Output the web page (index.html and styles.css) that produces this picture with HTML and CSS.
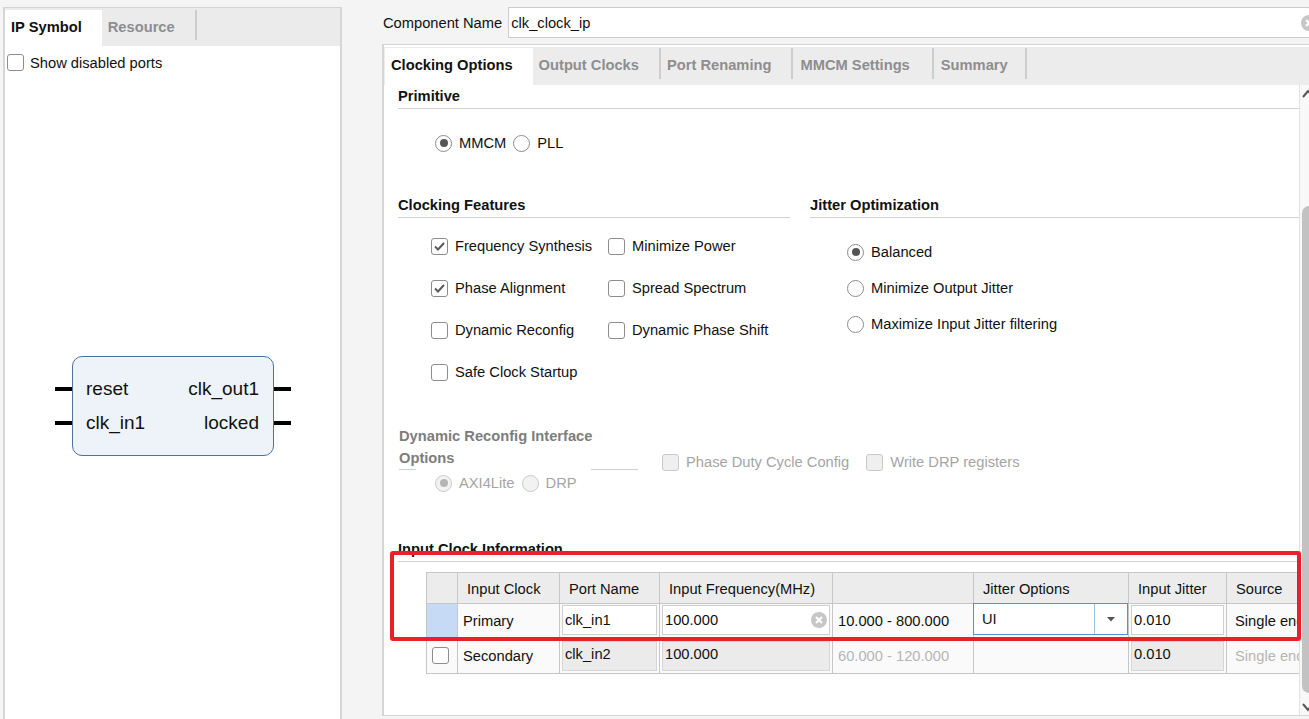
FILE: index.html
```html
<!DOCTYPE html>
<html>
<head>
<meta charset="utf-8">
<title>Clocking Wizard</title>
<link rel="stylesheet" href="styles.css">
</head>
<body>
<div class="app">
  <aside class="left">
    <div class="ltabs">
      <div class="ltab active">IP Symbol</div>
      <div class="ltab">Resource</div>
      <i class="sep"></i>
    </div>
    <div class="lbody">
      <div class="opt"><span class="cb"></span>Show disabled ports</div>
      <div class="symbol">
        <div class="sym-row"><span>reset</span><span>clk_out1</span></div>
        <div class="sym-row"><span>clk_in1</span><span>locked</span></div>
      </div>
    </div>
  </aside>

  <main class="right">
    <div class="name-row">
      <span class="name-label">Component Name</span>
      <div class="name-input">
        <span>clk_clock_ip</span>
        <svg class="clear" width="16" height="16" viewBox="0 0 16 16"><circle cx="8" cy="8" r="8" fill="#c6c6c6"/><path d="M5 5L11 11M11 5L5 11" stroke="#fff" stroke-width="2"/></svg>
      </div>
    </div>

    <div class="panel">
      <div class="tabs">
        <div class="tab active">Clocking Options</div>
        <div class="tab">Output Clocks</div>
        <i class="sep"></i>
        <div class="tab">Port Renaming</div>
        <i class="sep"></i>
        <div class="tab wide">MMCM Settings</div>
        <i class="sep"></i>
        <div class="tab last">Summary</div>
        <i class="sep"></i>
      </div>
      <div class="panel-body">
        <div class="content">
          <div class="title">Primitive</div>
          <div class="prim">
            <div class="ropt"><span class="radio on"></span>MMCM</div>
            <div class="ropt"><span class="radio"></span>PLL</div>
          </div>

          <div class="cols">
            <div class="col-left">
              <div class="title t2">Clocking Features</div>
              <div class="feat">
                <div class="item"><span class="cb"><svg width="15" height="15" viewBox="0 0 15 15"><path d="M3 7.5L6 10.5L12 4" fill="none" stroke="#5a5a5a" stroke-width="2"/></svg></span>Frequency Synthesis</div>
                <div class="item"><span class="cb"></span>Minimize Power</div>
                <div class="item"><span class="cb"><svg width="15" height="15" viewBox="0 0 15 15"><path d="M3 7.5L6 10.5L12 4" fill="none" stroke="#5a5a5a" stroke-width="2"/></svg></span>Phase Alignment</div>
                <div class="item"><span class="cb"></span>Spread Spectrum</div>
                <div class="item"><span class="cb"></span>Dynamic Reconfig</div>
                <div class="item"><span class="cb"></span>Dynamic Phase Shift</div>
                <div class="item"><span class="cb"></span>Safe Clock Startup</div>
              </div>
            </div>
            <div class="col-right">
              <div class="title t2">Jitter Optimization</div>
              <div class="jit">
                <div class="item"><span class="radio on"></span>Balanced</div>
                <div class="item"><span class="radio"></span>Minimize Output Jitter</div>
                <div class="item"><span class="radio"></span>Maximize Input Jitter filtering</div>
              </div>
            </div>
          </div>

          <div class="dyn">
            <div class="dyn-left">
              <div class="dyn-title">Dynamic Reconfig Interface Options</div>
              <div class="dyn-lines"><i class="s1"></i><i class="s2"></i></div>
              <div class="dyn-radios">
                <div class="ropt"><span class="radio on dis"></span>AXI4Lite</div>
                <div class="ropt"><span class="radio dis"></span>DRP</div>
              </div>
            </div>
            <div class="dyn-right">
              <div class="item"><span class="cb dis"></span>Phase Duty Cycle Config</div>
              <div class="item"><span class="cb dis"></span>Write DRP registers</div>
            </div>
          </div>

          <div class="title t2 ici">Input Clock Information</div>
          <div class="tbl">
            <div class="c h"></div>
            <div class="c h">Input Clock</div>
            <div class="c h">Port Name</div>
            <div class="c h">Input Frequency(MHz)</div>
            <div class="c h"></div>
            <div class="c h">Jitter Options</div>
            <div class="c h">Input Jitter</div>
            <div class="c h">Source</div>

            <div class="c sel"></div>
            <div class="c">Primary</div>
            <div class="c in"><div class="box">clk_in1</div></div>
            <div class="c in"><div class="box spread">100.000<svg width="16" height="16" viewBox="0 0 16 16"><circle cx="8" cy="8" r="8" fill="#c6c6c6"/><path d="M5 5L11 11M11 5L5 11" stroke="#fff" stroke-width="2"/></svg></div></div>
            <div class="c">10.000 - 800.000</div>
            <div class="c combo"><div class="cmb"><span class="cmb-text">UI</span><span class="cmb-btn"><svg width="8" height="5" viewBox="0 0 8 5"><path d="M0 0H8L4 4.5Z" fill="#555"/></svg></span></div></div>
            <div class="c in"><div class="box">0.010</div></div>
            <div class="c src">Single ended clock capable pin</div>

            <div class="c"><span class="cb"></span></div>
            <div class="c">Secondary</div>
            <div class="c in2"><div class="box gray">clk_in2</div></div>
            <div class="c in2"><div class="box gray">100.000</div></div>
            <div class="c muted">60.000 - 120.000</div>
            <div class="c"></div>
            <div class="c in2"><div class="box gray">0.010</div></div>
            <div class="c muted src">Single ended clock capable pin</div>
          </div>
        </div>
        <div class="scrollbar">
          <svg class="sb-up" width="12" height="20" viewBox="0 0 12 20"><path d="M1 12L6 6L11 12" fill="none" stroke="#555" stroke-width="2"/></svg>
          <div class="thumb"></div>
          <svg class="sb-down" width="12" height="10" viewBox="0 0 12 10"><path d="M1 2L6 8L11 2" fill="none" stroke="#555" stroke-width="2"/></svg>
        </div>
      </div>
    </div>
  </main>
</div>
<div class="annot"></div>
</body>
</html>
```

FILE: styles.css
```css
* { box-sizing: border-box; }
html, body { margin: 0; padding: 0; }
body {
  position: relative;
  width: 1309px;
  height: 719px;
  overflow: hidden;
  background: #f4f4f4;
  font-family: "Liberation Sans", Arial, sans-serif;
  font-size: 14.7px;
  color: #111;
}
.app { display: flex; align-items: flex-start; width: 1317px; }

/* left panel */
.left {
  flex: none;
  width: 339px;
  height: 720px;
  margin: 7px 0 0 3px;
  border-top: 1px solid #d4d4d4;
  border-left: 2px solid #d6d6d6;
  border-right: 2px solid #d6d6d6;
  background: #fff;
  display: flex;
  flex-direction: column;
}
.ltabs { flex: none; display: flex; height: 38px; padding-top: 2px; background: #ebebeb; }
.ltab { height: 36px; line-height: 34px; padding: 0 20px 0 6px; font-weight: bold; color: #8e8e8e; }
.ltab.active { background: #fff; color: #111; }
.sep { display: block; flex: none; width: 2px; height: 30px; background: #cdcdcd; }
.lbody { flex: 1; padding: 8px 0 0 2px; }
.opt { display: flex; align-items: center; height: 17px; }
.opt .cb { margin-right: 6px; }

.symbol {
  width: 202px;
  height: 100px;
  margin: 285px 0 0 65px;
  padding: 21px 14px 0 13px;
  border: 1px solid #52709e;
  border-radius: 10px;
  background: #eef3fa;
  font-size: 19px;
  color: #111;
}
.sym-row { position: relative; display: flex; justify-content: space-between; height: 22px; line-height: 22px; }
.sym-row + .sym-row { margin-top: 12px; }
.sym-row::before, .sym-row::after { content: ""; position: absolute; top: 9px; width: 17px; height: 4px; background: #000; }
.sym-row::before { left: -31px; }
.sym-row::after { right: -32px; }

/* right */
.right { flex: none; width: 935px; margin-left: 40px; display: flex; flex-direction: column; }
.name-row { display: flex; align-items: center; height: 31px; margin: 7px -8px 0 1px; }
.name-label { margin-right: 6px; white-space: nowrap; }
.name-input {
  flex: 1;
  height: 31px;
  border: 1px solid #cdcdcd;
  background: #fff;
  display: flex;
  align-items: center;
  justify-content: space-between;
  padding-left: 2px;
}
.name-input .clear { margin-right: 7px; }

.panel {
  margin-top: 6px;
  height: 672px;
  border-top: 1px solid #d6d6d6;
  border-left: 2px solid #d6d6d6;
  border-bottom: 1px solid #d6d6d6;
  background: #fff;
  padding-top: 2px;
  display: flex;
  flex-direction: column;
}
.tabs { flex: none; display: flex; height: 38px; padding-left: 1px; background: #ececec; }
.tab { height: 37px; margin-top: 1px; line-height: 34px; padding: 0 20px 0 6px; font-weight: bold; color: #8e8e8e; white-space: nowrap; }
.tab.wide { padding: 0 22px 0 7px; }
.tab.last { padding: 0 17px 0 7px; }
.tab.active { background: #fff; color: #111; }
.tabs .sep { margin-top: 1px; height: 31px; }

.panel-body { flex: 1; min-height: 0; display: flex; }
.content { flex: 1; min-width: 0; overflow: hidden; padding-left: 14px; }
.scrollbar {
  flex: none;
  width: 18px;
  border-left: 1px solid #e2e2e2;
  background: #f8f8f8;
  display: flex;
  flex-direction: column;
  align-items: flex-start;
}
.sb-up { margin-left: 2px; }
.thumb { width: 14px; height: 487px; margin: 101px 0 0 2px; border-radius: 7px; background: #c2c2c2; }
.sb-down { margin: 9px 0 0 2px; }

/* controls */
.cb {
  flex: none;
  width: 17px;
  height: 17px;
  border: 1px solid #8d8d8d;
  border-radius: 3px;
  background: #fff;
  display: flex;
  align-items: center;
  justify-content: center;
}
.cb.dis { border-color: #c9c9c9; background: #efefef; }
.radio {
  flex: none;
  width: 17px;
  height: 17px;
  border: 1px solid #8d8d8d;
  border-radius: 50%;
  background: #fff;
  display: flex;
  align-items: center;
  justify-content: center;
}
.radio.on::after { content: ""; width: 8px; height: 8px; border-radius: 50%; background: #555; }
.radio.dis { border-color: #c9c9c9; background: #f2f2f2; }
.radio.dis.on::after { background: #b5b5b5; }

.title { font-weight: bold; line-height: 18px; padding: 2px 0 3px; border-bottom: 1px solid #d2d2d2; white-space: nowrap; }
.title.t2 { padding: 2px 0 3px; }

.ropt { display: flex; align-items: center; margin-right: 7px; white-space: nowrap; }
.ropt .radio { margin-right: 7px; }
.prim { display: flex; align-items: center; height: 18px; margin: 25px 0 0 37px; }

.cols { display: flex; margin-top: 42px; }
.col-left { flex: none; width: 392px; }
.col-right { flex: 1; margin-left: 20px; }
.item { display: flex; align-items: center; white-space: nowrap; }
.item .cb, .item .radio { margin-right: 7px; }
.feat { display: grid; grid-template-columns: 177px auto; grid-auto-rows: 42px; margin: 7px 0 0 33px; }
.jit { margin: 16px 0 0 37px; }
.jit .item { height: 36px; }

.dyn { display: flex; align-items: flex-start; margin-top: 32px; }
.dyn-left { flex: none; width: 240px; padding-left: 1px; }
.dyn-title { width: 200px; height: 39px; font-weight: bold; color: #7d7d7d; line-height: 22px; }
.dyn-lines { display: flex; justify-content: space-between; margin-top: 5px; }
.dyn-lines i { display: block; height: 0; border-top: 1px solid #cfcfcf; }
.dyn-lines .s1 { width: 17px; }
.dyn-lines .s2 { width: 47px; }
.dyn-radios { display: flex; align-items: center; height: 18px; margin: 4px 0 0 36px; color: #a5a5a5; }
.dyn-right { display: flex; align-items: center; height: 18px; margin: 28px 0 0 24px; color: #a5a5a5; }
.dyn-right .item + .item { margin-left: 17px; }

.ici { margin-top: 46px; }

/* table */
.tbl {
  display: grid;
  grid-template-columns: 31px 102px 100px 173px 141px 155px 98px 200px;
  grid-template-rows: 31px 34px 36px;
  width: max-content;
  margin: 10px 0 0 28px;
  border-top: 1px solid #c6c6c6;
  border-left: 1px solid #c6c6c6;
}
.c {
  display: flex;
  align-items: center;
  padding-left: 5px;
  white-space: nowrap;
  overflow: visible;
  background: #fafafa;
  border-right: 1px solid #c6c6c6;
  border-bottom: 1px solid #c6c6c6;
}
.c.h { background: #ececec; padding-left: 9px; padding-top: 1px; }
.c.src { padding-left: 8px; }
.c.sel { background: #c6daf6; }
.c.muted { color: #b5b5b5; }
.c.in { padding: 1px 2px 2px 2px; align-items: stretch; }
.c.in2 { padding: 3px 2px 2px 2px; align-items: stretch; }
.box {
  flex: 1;
  display: flex;
  align-items: center;
  padding-left: 2px;
  border: 1px solid #cfcfcf;
  background: #fff;
}
.box.spread { justify-content: space-between; padding-right: 2px; }
.box.gray { background: #ebebeb; border-color: #d6d6d6; align-items: flex-start; line-height: 24px; }
.c.combo { padding: 0; align-items: stretch; }
.cmb {
  flex: 1;
  display: flex;
  margin: -1px 0 2px -1px;
  border: 1px solid #4f94d4;
  background: #fff;
}
.cmb-text { flex: 1; display: flex; align-items: center; padding-left: 8px; }
.cmb-btn { width: 33px; display: flex; align-items: center; justify-content: center; border-left: 1px solid #9bbfe0; }

/* annotation overlay */
.annot {
  position: absolute;
  left: 390px;
  top: 551px;
  width: 911px;
  height: 90px;
  border: 4px solid #ea1f27;
  border-radius: 3px;
}
```
